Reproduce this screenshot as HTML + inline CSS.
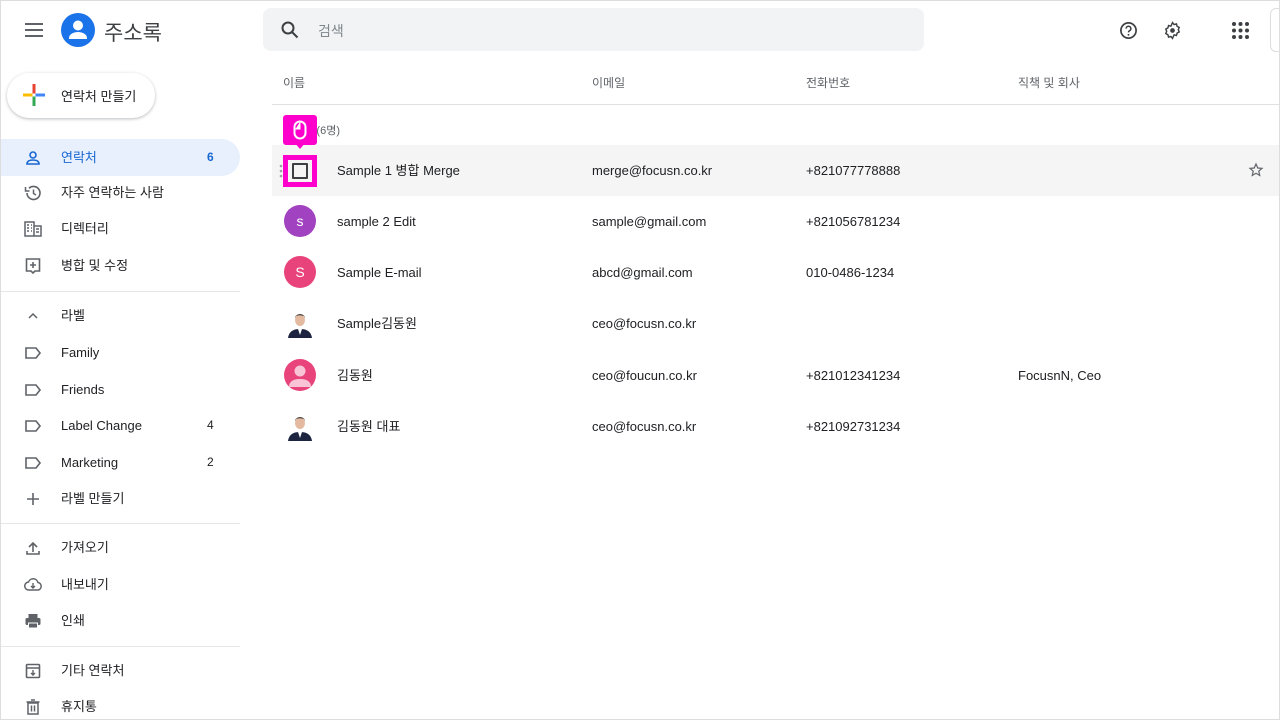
<!DOCTYPE html><html><head><meta charset="utf-8"><style>
*{box-sizing:border-box;margin:0;padding:0}
body{width:1280px;height:720px;overflow:hidden;background:#fff;font-family:"Liberation Sans","Noto Sans CJK KR",sans-serif;color:#202124;position:relative;font-size:13px}
.frame{position:absolute;inset:0;border:1px solid #ddd;pointer-events:none}
.abs{position:absolute}
.nav{position:absolute;left:0;width:240px;height:37px;line-height:37px;font-size:13px;color:#202124}
.nav .ic{position:absolute;left:24px;top:10px;width:18px;height:18px}
.nav .t{position:absolute;left:61px;top:0}
.nav .n{position:absolute;left:207px;top:0;font-size:12px}
.sep{position:absolute;left:0;width:240px;height:1px;background:#e6e6e6}
.row{position:absolute;left:272px;width:1008px;height:51px}
.row span{position:absolute;top:0;line-height:51px;height:51px;font-size:13px}
.av{position:absolute;left:12px;top:9px;width:32px;height:32px;border-radius:50%;color:#fff;font-size:14px;text-align:center;line-height:32px}
.hd{position:absolute;top:74px;font-size:12px;color:#5f6368}
</style></head><body>
<svg class="abs" style="left:24px;top:21px" width="20" height="18" viewBox="0 0 20 18"><path d="M1 3h18M1 9h18M1 15h18" stroke="#5f6368" stroke-width="2"/></svg>
<svg class="abs" style="left:61px;top:13px" width="34" height="34" viewBox="0 0 34 34"><circle cx="17" cy="17" r="17" fill="#1a73e8"/><circle cx="17" cy="12.5" r="5" fill="#fff"/><path d="M8 25c0-4 5-6 9-6s9 2 9 6v1H8z" fill="#fff"/></svg>
<div class="abs" style="left:104px;top:17px;font-size:21px;color:#3c4043">주소록</div>
<div class="abs" style="left:263px;top:8px;width:661px;height:43px;background:#f1f3f4;border-radius:8px"></div>
<svg class="abs" style="left:280px;top:20px" width="20" height="20" viewBox="0 0 20 20"><circle cx="8" cy="8" r="5.5" fill="none" stroke="#3c4043" stroke-width="2"/><path d="M12 12l5.5 5.5" stroke="#3c4043" stroke-width="2"/></svg>
<div class="abs" style="left:318px;top:21px;font-size:14px;color:#80868b">검색</div>
<svg class="abs" style="left:1119px;top:21px" width="19" height="19" viewBox="0 0 20 20"><circle cx="10" cy="10" r="8" fill="none" stroke="#3c4043" stroke-width="1.8"/><path d="M7.5 8a2.5 2.5 0 1 1 3.5 2.3c-.8.4-1 .9-1 1.7" fill="none" stroke="#3c4043" stroke-width="1.6"/><circle cx="10" cy="14.5" r="1" fill="#3c4043"/></svg>
<svg class="abs" style="left:1163px;top:21px" width="19" height="19" viewBox="0 0 24 24"><path d="M12 2l2 2.5 3-.8.8 3 2.7 1.5-1.2 2.8 1.2 2.8-2.7 1.5-.8 3-3-.8L12 22l-2-2.5-3 .8-.8-3L3.5 15.8 4.7 13 3.5 10.2 6.2 8.7l.8-3 3 .8z" fill="none" stroke="#3c4043" stroke-width="1.8"/><circle cx="12" cy="12" r="3" fill="#3c4043"/></svg>
<svg class="abs" style="left:1232px;top:22px" width="17" height="17" viewBox="0 0 17 17"><g fill="#3c4043"><circle cx="2" cy="2" r="2"/><circle cx="8.5" cy="2" r="2"/><circle cx="15" cy="2" r="2"/><circle cx="2" cy="8.5" r="2"/><circle cx="8.5" cy="8.5" r="2"/><circle cx="15" cy="8.5" r="2"/><circle cx="2" cy="15" r="2"/><circle cx="8.5" cy="15" r="2"/><circle cx="15" cy="15" r="2"/></g></svg>
<div class="abs" style="left:1270px;top:8px;width:20px;height:44px;border:1px solid #ddd;border-radius:6px"></div>
<div class="abs" style="left:7px;top:73px;width:148px;height:45px;border-radius:23px;box-shadow:0 1px 3px rgba(60,64,67,.35);background:#fff"></div>
<svg class="abs" style="left:23px;top:84px" width="22" height="22" viewBox="0 0 22 22"><rect x="9.5" y="0" width="3" height="9.5" fill="#ea4335"/><rect x="12.5" y="9.5" width="9.5" height="3" fill="#4285f4"/><rect x="9.5" y="12.5" width="3" height="9.5" fill="#34a853"/><rect x="0" y="9.5" width="9.5" height="3" fill="#fbbc04"/></svg>
<div class="abs" style="left:61px;top:86px;font-size:13px">연락처 만들기</div>
<div class="abs" style="left:0;top:139px;width:240px;height:37px;background:#e8f0fe;border-radius:0 19px 19px 0"></div>
<div class="nav" style="top:139px;color:#1967d2"><svg class="ic" viewBox="0 0 18 18"><circle cx="9" cy="6" r="3" fill="none" stroke="#1967d2" stroke-width="1.6"/><path d="M3 15c0-3 3-4 6-4s6 1 6 4z" fill="none" stroke="#1967d2" stroke-width="1.6"/></svg><span class="t">연락처</span><span class="n" style="font-weight:bold">6</span></div>
<div class="nav" style="top:174px"><svg class="ic" viewBox="0 0 18 18"><path d="M3 9a6.5 6.5 0 1 0 2-4.7" fill="none" stroke="#5f6368" stroke-width="1.6"/><path d="M1.5 3v4h4" fill="none" stroke="#5f6368" stroke-width="1.5"/><path d="M9.5 5.5v4l2.5 1.5" fill="none" stroke="#5f6368" stroke-width="1.5"/></svg><span class="t">자주 연락하는 사람</span></div>
<div class="nav" style="top:210px"><svg class="ic" viewBox="0 0 18 18"><path d="M1 2h9v14H1zM10 6h7v10h-7" fill="none" stroke="#5f6368" stroke-width="1.5"/><path d="M3 5h2M7 5h1M3 8h2M7 8h1M3 11h2M7 11h1M12 9h3M12 12h3" stroke="#5f6368" stroke-width="1.4"/></svg><span class="t">디렉터리</span></div>
<div class="nav" style="top:247px"><svg class="ic" viewBox="0 0 18 18"><path d="M2.5 2h13v12h-4.5l-2 2-2-2H2.5z" fill="none" stroke="#5f6368" stroke-width="1.6"/><path d="M9 5v6M6 8h6" stroke="#5f6368" stroke-width="1.6"/></svg><span class="t">병합 및 수정</span></div>
<div class="sep" style="top:291px"></div>
<div class="nav" style="top:297px"><svg class="ic" viewBox="0 0 18 18"><path d="M5 11l4-4 4 4" fill="none" stroke="#5f6368" stroke-width="1.5"/></svg><span class="t">라벨</span></div>
<div class="nav" style="top:334px"><svg class="ic" viewBox="0 0 18 18"><path d="M2 4h10l4 5-4 5H2z" fill="none" stroke="#5f6368" stroke-width="1.6"/></svg><span class="t">Family</span></div>
<div class="nav" style="top:371px"><svg class="ic" viewBox="0 0 18 18"><path d="M2 4h10l4 5-4 5H2z" fill="none" stroke="#5f6368" stroke-width="1.6"/></svg><span class="t">Friends</span></div>
<div class="nav" style="top:407px"><svg class="ic" viewBox="0 0 18 18"><path d="M2 4h10l4 5-4 5H2z" fill="none" stroke="#5f6368" stroke-width="1.6"/></svg><span class="t">Label Change</span><span class="n">4</span></div>
<div class="nav" style="top:444px"><svg class="ic" viewBox="0 0 18 18"><path d="M2 4h10l4 5-4 5H2z" fill="none" stroke="#5f6368" stroke-width="1.6"/></svg><span class="t">Marketing</span><span class="n">2</span></div>
<div class="nav" style="top:480px"><svg class="ic" viewBox="0 0 18 18"><path d="M9 3v12M3 9h12" stroke="#5f6368" stroke-width="1.6"/></svg><span class="t">라벨 만들기</span></div>
<div class="sep" style="top:523px"></div>
<div class="nav" style="top:529px"><svg class="ic" viewBox="0 0 18 18"><path d="M9 13V4M5 8l4-4 4 4M3 12v3h12v-3" fill="none" stroke="#5f6368" stroke-width="1.6"/></svg><span class="t">가져오기</span></div>
<div class="nav" style="top:566px"><svg class="ic" viewBox="0 0 18 18"><path d="M5 14a4 4 0 0 1-.5-8A5 5 0 0 1 14 6.5a3.8 3.8 0 0 1 0 7.5z" fill="none" stroke="#5f6368" stroke-width="1.5"/><path d="M9 7v5M7 10l2 2 2-2" fill="none" stroke="#5f6368" stroke-width="1.4"/></svg><span class="t">내보내기</span></div>
<div class="nav" style="top:602px"><svg class="ic" viewBox="0 0 18 18"><rect x="1.5" y="6" width="15" height="7" rx="1.5" fill="#5f6368"/><rect x="4.5" y="2" width="9" height="4" fill="#5f6368"/><rect x="4.5" y="11" width="9" height="5" fill="#5f6368" stroke="#fff" stroke-width="1"/></svg><span class="t">인쇄</span></div>
<div class="sep" style="top:646px"></div>
<div class="nav" style="top:652px"><svg class="ic" viewBox="0 0 18 18"><rect x="2.5" y="2.5" width="13" height="13" rx="1" fill="none" stroke="#5f6368" stroke-width="1.6"/><path d="M2.5 6h13M9 8v5M7 11l2 2 2-2" fill="none" stroke="#5f6368" stroke-width="1.4"/></svg><span class="t">기타 연락처</span></div>
<div class="nav" style="top:688px"><svg class="ic" viewBox="0 0 18 18"><path d="M4 5h10v11H4zM2.5 4h13M7 2h4M7.5 7.5v6M10.5 7.5v6" fill="none" stroke="#5f6368" stroke-width="1.5"/></svg><span class="t">휴지통</span></div>
<div class="hd" style="left:283px">이름</div>
<div class="hd" style="left:592px">이메일</div>
<div class="hd" style="left:806px">전화번호</div>
<div class="hd" style="left:1018px">직책 및 회사</div>
<div class="abs" style="left:272px;top:104px;width:1008px;height:1px;background:#e0e0e0"></div>
<div class="abs" style="left:283px;top:122px;font-size:11px;color:#5f6368">연락처 (6명)</div>
<div class="row" style="top:145px;background:#f5f5f5"><span style="left:65px">Sample 1 병합 Merge</span><span style="left:320px">merge@focusn.co.kr</span><span style="left:534px">+821077778888</span>
<svg style="position:absolute;left:976px;top:17px" width="16" height="16" viewBox="0 0 24 24"><path d="M12 3l2.7 6 6.3.6-4.8 4.2 1.4 6.4L12 16.9 6.4 20.2l1.4-6.4L3 9.6l6.3-.6z" fill="none" stroke="#5f6368" stroke-width="1.8"/></svg></div>
<div class="row" style="top:196px"><div class="av" style="background:#a142c0">s</div><span style="left:65px">sample 2 Edit</span><span style="left:320px">sample@gmail.com</span><span style="left:534px">+821056781234</span></div>
<div class="row" style="top:247px"><div class="av" style="background:#e8437a">S</div><span style="left:65px">Sample E-mail</span><span style="left:320px">abcd@gmail.com</span><span style="left:534px">010-0486-1234</span></div>
<div class="row" style="top:298px"><svg style="position:absolute;left:14px;top:10px" width="28" height="32" viewBox="0 0 28 32"><path d="M2 30c1-7 6-9 12-9s11 2 12 9z" fill="#1c2440"/><path d="M12 21l2 6 2-6z" fill="#fff"/><ellipse cx="14" cy="12" rx="5" ry="6" fill="#e3b9a0"/><path d="M9 10c0-5 10-5 10 0l-1-2c-3-1-6-1-8 0z" fill="#222"/></svg><span style="left:65px">Sample김동원</span><span style="left:320px">ceo@focusn.co.kr</span></div>
<div class="row" style="top:350px"><div class="av" style="background:#e8437a;overflow:hidden"><svg width="32" height="32" viewBox="0 0 32 32"><circle cx="16" cy="12" r="5.5" fill="#f8c4d6"/><path d="M5 28c0-6 5-8 11-8s11 2 11 8z" fill="#f8c4d6"/></svg></div><span style="left:65px">김동원</span><span style="left:320px">ceo@foucun.co.kr</span><span style="left:534px">+821012341234</span><span style="left:746px">FocusnN, Ceo</span></div>
<div class="row" style="top:401px"><svg style="position:absolute;left:14px;top:10px" width="28" height="32" viewBox="0 0 28 32"><path d="M2 30c1-7 6-9 12-9s11 2 12 9z" fill="#1c2440"/><path d="M12 21l2 6 2-6z" fill="#fff"/><ellipse cx="14" cy="12" rx="5" ry="6" fill="#e3b9a0"/><path d="M9 10c0-5 10-5 10 0l-1-2c-3-1-6-1-8 0z" fill="#222"/></svg><span style="left:65px">김동원 대표</span><span style="left:320px">ceo@focusn.co.kr</span><span style="left:534px">+821092731234</span></div>
<svg class="abs" style="left:278px;top:163px" width="6" height="16" viewBox="0 0 6 16"><g fill="#9aa0a6"><circle cx="3" cy="3" r="1.3"/><circle cx="3" cy="8" r="1.3"/><circle cx="3" cy="13" r="1.3"/></g></svg>
<div class="abs" style="left:283px;top:155px;width:34px;height:32px;background:#ff00cc"></div>
<div class="abs" style="left:288px;top:160px;width:24px;height:22px;background:#f5f5f5"></div>
<div class="abs" style="left:292px;top:163px;width:16px;height:16px;border:2px solid #3c4043;border-radius:1px"></div>
<div class="abs" style="left:283px;top:115px;width:34px;height:30px;background:#ff00cc;border-radius:3px"></div>
<div class="abs" style="left:294px;top:142px;width:0;height:0;border-left:6px solid transparent;border-right:6px solid transparent;border-top:7px solid #ff00cc"></div>
<svg class="abs" style="left:293px;top:120px" width="14" height="20" viewBox="0 0 14 20"><rect x="1.5" y="1.5" width="11" height="17" rx="5.5" fill="none" stroke="#fff" stroke-width="2"/><path d="M7 2v7H2.5" fill="#fff" stroke="#fff"/></svg>
<div class="frame"></div>
</body></html>
